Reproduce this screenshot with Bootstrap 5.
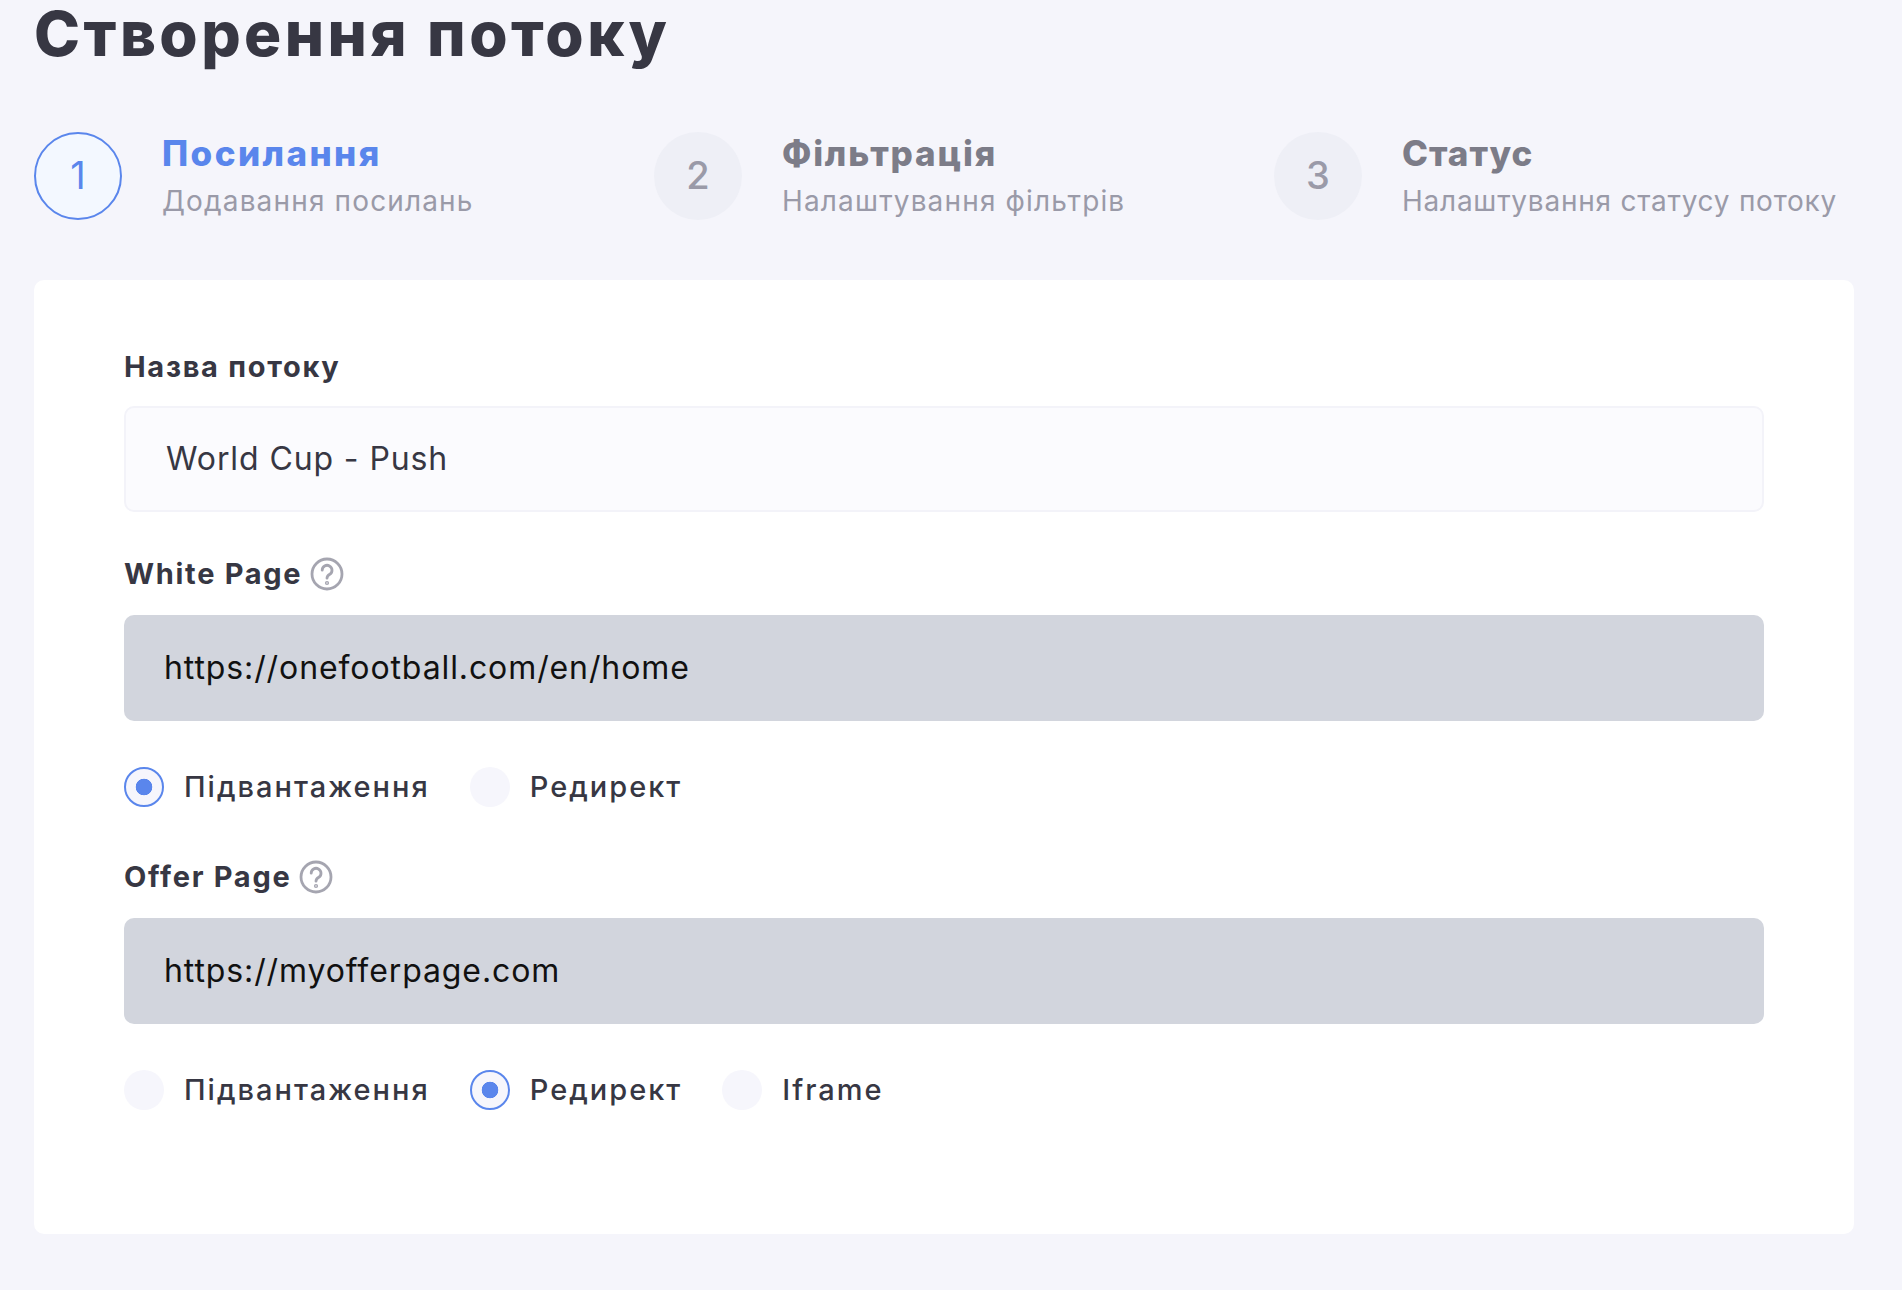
<!DOCTYPE html>
<html lang="uk">
<head>
<meta charset="utf-8">
<title>Створення потоку</title>
<link rel="stylesheet" href="https://cdn.jsdelivr.net/npm/bootstrap@5.3.0/dist/css/bootstrap.min.css">
<style>
html,body{height:100%;}
body{background:#f5f5fb;font-family:Inter,"Noto Sans",sans-serif;color:#373743;overflow:hidden;}
.page-wrap{padding:0 48px 0 34px;}
.page-title{font-size:62px;line-height:68px;font-weight:800;letter-spacing:3.4px;margin:0 0 63px;color:#373743;}
.stepper{display:grid;grid-template-columns:repeat(3,1fr);column-gap:40px;margin-bottom:60px;}
.step-num{width:88px;height:88px;flex:none;background:#eeeff6;color:#9a9aa8;font-size:38px;font-weight:500;margin-right:40px;}
.step-num.on{background:#f3f8ff;border:2px solid #5a86ec;color:#5a86ec;font-weight:400;}
.step-title{font-size:35px;line-height:44px;font-weight:800;letter-spacing:1.8px;color:#7c7c88;margin-bottom:7px;}
.step-title.on{color:#5a86ec;letter-spacing:2.4px;}
.step-title.tight{letter-spacing:1px;}
.step-sub{font-size:28px;line-height:38px;letter-spacing:1.15px;color:#9a9aa8;}
.step-sub.tight{letter-spacing:.75px;}
.form-panel{background:#fff;border-radius:10px;padding:69px 90px 124px;}
.field-label{font-size:29px;line-height:36px;font-weight:700;letter-spacing:1.7px;color:#373743;margin-bottom:23px;display:flex;align-items:center;gap:8px;}
.field-label.first-label{margin-bottom:21px;}
.q-icon{width:34px;height:34px;flex:none;}
.field-box.form-control{height:106px;border-radius:10px;font-size:32px;line-height:1;letter-spacing:.9px;display:flex;align-items:center;}
.field-box.plain{background:#fbfbfe;border:2px solid #f3f3f9;color:#373743;padding:0 40px;margin-bottom:44px;}
.field-box.filled{background:#d2d5dd;border:0;color:#111;padding:0 40px;}
.radio-row{display:flex;gap:40px;margin-top:46px;margin-bottom:52px;}
.radio-item.form-check{display:flex;align-items:center;gap:20px;padding:0;margin:0;min-height:40px;}
.radio-item .form-check-input{width:40px;height:40px;margin:0;float:none;background-color:#f6f6fc;border:0;flex:none;}
.radio-item .form-check-input:checked{background-color:#f6f6fc;border:2px solid #5a86ec;background-image:radial-gradient(circle,#5a86ec 0,#5a86ec 8px,transparent 8.6px);}
.radio-item .form-check-label{font-size:29px;line-height:40px;font-weight:500;letter-spacing:2px;color:#373743;}
.no-end{margin-bottom:0;}
</style>
</head>
<body>
<div class="page-wrap">
<h1 class="page-title">Створення потоку</h1>
<div class="stepper">
<div class="d-flex align-items-center">
<div class="step-num on rounded-circle d-flex align-items-center justify-content-center">1</div>
<div><div class="step-title on">Посилання</div><div class="step-sub">Додавання посилань</div></div>
</div>
<div class="d-flex align-items-center">
<div class="step-num rounded-circle d-flex align-items-center justify-content-center">2</div>
<div><div class="step-title">Фільтрація</div><div class="step-sub">Налаштування фільтрів</div></div>
</div>
<div class="d-flex align-items-center">
<div class="step-num rounded-circle d-flex align-items-center justify-content-center">3</div>
<div><div class="step-title tight">Статус</div><div class="step-sub tight">Налаштування статусу потоку</div></div>
</div>
</div>
<div class="form-panel">
<div class="field-label first-label">Назва потоку</div>
<div class="form-control field-box plain">World Cup - Push</div>
<div class="field-label">White Page
<svg class="q-icon" viewBox="0 0 34 34" fill="none" stroke="#a5a5b0" stroke-width="2.8" stroke-linecap="round"><circle cx="17" cy="17" r="15"/><path d="M12.2 13.2a4.9 4.9 0 1 1 7.6 4.1c-1.8 1.1-2.8 2-2.8 3.9"/><circle cx="17" cy="26" r=".7"/></svg>
</div>
<div class="form-control field-box filled">https://onefootball.com/en/home</div>
<div class="radio-row">
<div class="form-check radio-item"><input class="form-check-input" type="radio" name="wp" id="wp1" checked><label class="form-check-label" for="wp1">Підвантаження</label></div>
<div class="form-check radio-item"><input class="form-check-input" type="radio" name="wp" id="wp2"><label class="form-check-label" for="wp2">Редирект</label></div>
</div>
<div class="field-label">Offer Page
<svg class="q-icon" viewBox="0 0 34 34" fill="none" stroke="#a5a5b0" stroke-width="2.8" stroke-linecap="round"><circle cx="17" cy="17" r="15"/><path d="M12.2 13.2a4.9 4.9 0 1 1 7.6 4.1c-1.8 1.1-2.8 2-2.8 3.9"/><circle cx="17" cy="26" r=".7"/></svg>
</div>
<div class="form-control field-box filled">https://myofferpage.com</div>
<div class="radio-row no-end">
<div class="form-check radio-item"><input class="form-check-input" type="radio" name="op" id="op1"><label class="form-check-label" for="op1">Підвантаження</label></div>
<div class="form-check radio-item"><input class="form-check-input" type="radio" name="op" id="op2" checked><label class="form-check-label" for="op2">Редирект</label></div>
<div class="form-check radio-item"><input class="form-check-input" type="radio" name="op" id="op3"><label class="form-check-label" for="op3">Iframe</label></div>
</div>
</div>
</div>
<script src="https://cdn.jsdelivr.net/npm/bootstrap@5.3.0/dist/js/bootstrap.bundle.min.js"></script>
</body>
</html>
